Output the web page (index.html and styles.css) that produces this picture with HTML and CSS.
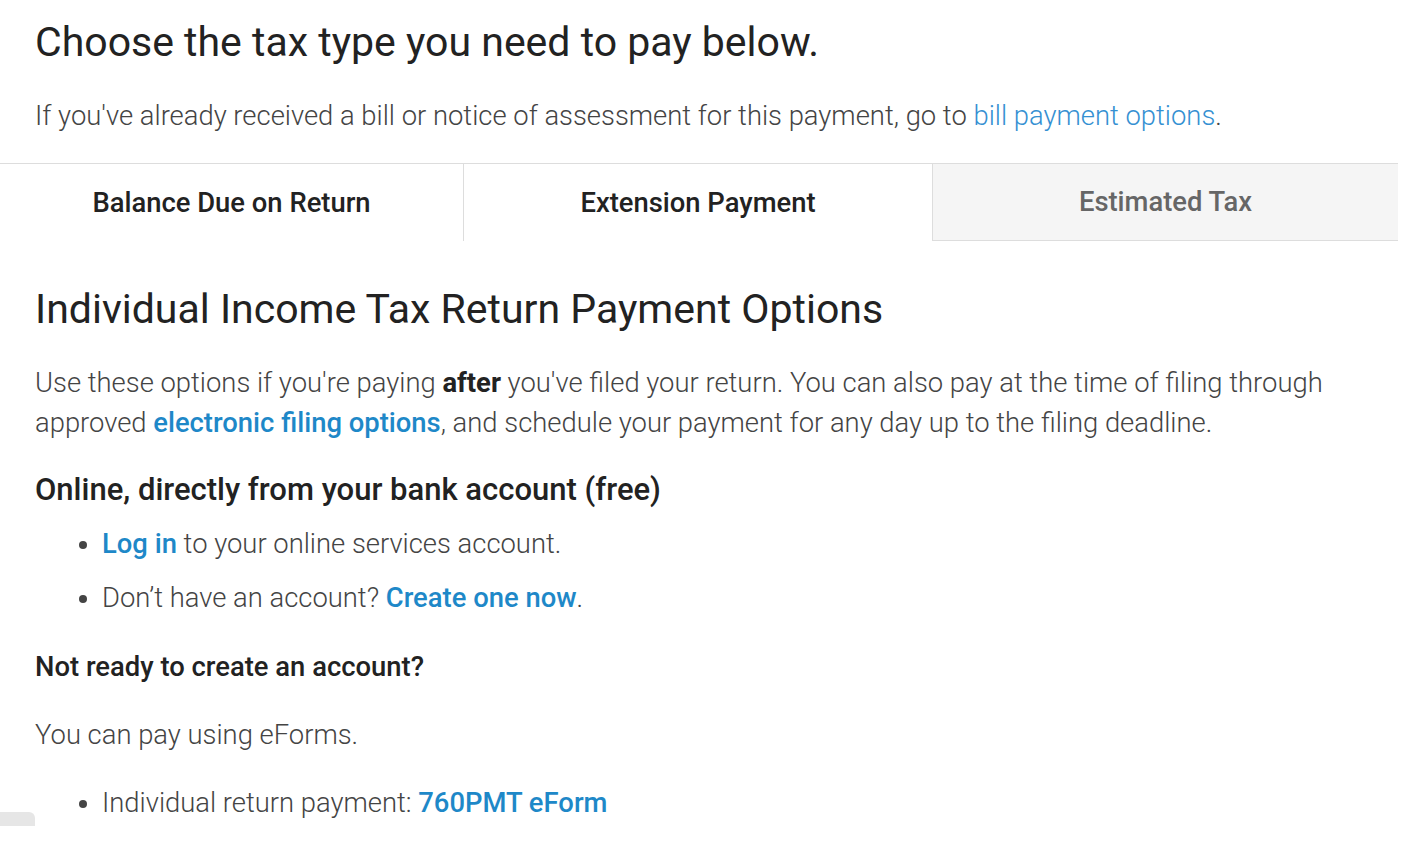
FILE: index.html
```html
<!DOCTYPE html>
<html>
<head>
<meta charset="utf-8">
<link rel="stylesheet" href="styles.css">
</head>
<body>
<div class="page">
  <header class="intro">
    <h1 class="title">Choose the tax type you need to pay below.</h1>
    <p class="lead">If you've already received a bill or notice of assessment for this payment, go to <a class="plain-link" href="#">bill payment options</a>.</p>
  </header>
  <nav class="tabs">
    <div class="tab tab-first">Balance Due on Return</div>
    <div class="tab tab-second">Extension Payment</div>
    <div class="tab tab-inactive">Estimated Tax</div>
  </nav>
  <section class="content">
    <h2 class="section-title">Individual Income Tax Return Payment Options</h2>
    <p class="body-text">Use these options if you're paying <strong>after</strong> you've filed your return. You can also pay at the time of filing through approved <a class="link" href="#">electronic filing options</a>, and schedule your payment for any day up to the filing deadline.</p>
    <h3 class="sub-title">Online, directly from your bank account (free)</h3>
    <ul class="list">
      <li><a class="link" href="#">Log in</a> to your online services account.</li>
      <li>Don’t have an account? <a class="link" href="#">Create one now</a>.</li>
    </ul>
    <h4 class="minor-title">Not ready to create an account?</h4>
    <p class="body-text eforms">You can pay using eForms.</p>
    <ul class="list list-last">
      <li>Individual return payment: <a class="link" href="#">760PMT eForm</a></li>
    </ul>
  </section>
</div>
<div class="corner-tab"></div>
</body>
</html>
```
FILE: styles.css
```css
html, body {
  margin: 0;
  padding: 0;
  background: #ffffff;
  overflow: hidden;
}
body {
  font-family: Roboto, "Liberation Sans", sans-serif;
  color: #444;
  width: 1420px;
  height: 842px;
}
.page {
  width: 1398px;
}
.intro {
  padding: 0 0 0 35px;
}
.title {
  margin: 0;
  padding-top: 18px;
  font-size: 41px;
  font-weight: 400;
  color: #222;
  line-height: 48px;
}
.lead {
  margin: 0;
  padding-top: 32px;
  font-size: 27.4px;
  font-weight: 300;
  line-height: 36px;
  color: #444;
  padding-bottom: 29px;
}
.plain-link {
  color: #3590d2;
  text-decoration: none;
  font-weight: 300;
}
.tabs {
  display: flex;
  border-top: 1px solid #ddd;
  height: 77px;
}
.tab {
  display: flex;
  align-items: center;
  justify-content: center;
  font-size: 27.4px;
  font-weight: 500;
  color: #222;
  background: #fff;
  border-left: 1px solid #ddd;
  flex: 1 1 0;
}
.tab-first {
  border-left: none;
  flex: 0 0 463px;
}
.tab-second {
  flex: 0 0 468px;
}
.tab-inactive {
  background: #f5f5f5;
  color: #666;
  border-bottom: 1px solid #ddd;
}
.content {
  padding-left: 35px;
}
.section-title {
  margin: 0;
  padding-top: 44px;
  font-size: 41px;
  font-weight: 400;
  color: #222;
  line-height: 48px;
}
.body-text {
  margin: 0;
  padding-top: 30px;
  font-size: 27.4px;
  font-weight: 300;
  line-height: 40px;
  color: #444;
}
.body-text strong {
  font-weight: 700;
  color: #222;
}
.link {
  color: #1e88c8;
  font-weight: 500;
  text-decoration: none;
}
.sub-title {
  margin: 0;
  padding-top: 27px;
  font-size: 31px;
  font-weight: 500;
  color: #222;
  line-height: 40px;
}
.list {
  margin: 0;
  padding: 7px 0 0 67px;
  font-size: 27.4px;
  font-weight: 300;
  color: #444;
}
.list li {
  line-height: 54px;
}
.list-last {
  padding-top: 21px;
}
.minor-title {
  margin: 0;
  padding-top: 22px;
  font-size: 27.4px;
  font-weight: 500;
  color: #222;
  line-height: 40px;
}
.eforms {
  padding-top: 28px;
}
.corner-tab {
  position: absolute;
  left: 0;
  top: 812px;
  width: 35px;
  height: 14px;
  background: #e6e6e6;
  border-radius: 0 6px 0 0;
}
```
